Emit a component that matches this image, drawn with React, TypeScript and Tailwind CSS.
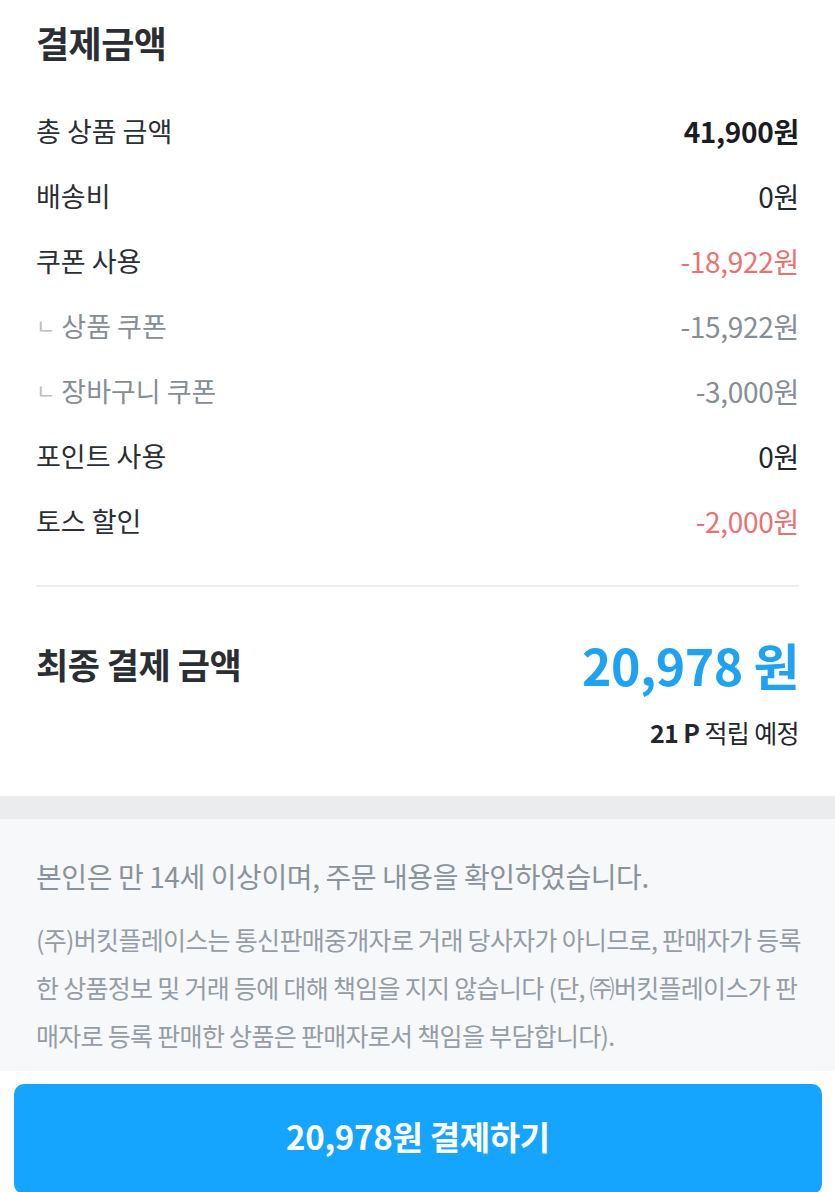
const rows: { label: string; value: string; tone: "strong" | "normal" | "red" | "sub" }[] = [
  { label: "총 상품 금액", value: "41,900원", tone: "strong" },
  { label: "배송비", value: "0원", tone: "normal" },
  { label: "쿠폰 사용", value: "-18,922원", tone: "red" },
  { label: "상품 쿠폰", value: "-15,922원", tone: "sub" },
  { label: "장바구니 쿠폰", value: "-3,000원", tone: "sub" },
  { label: "포인트 사용", value: "0원", tone: "normal" },
  { label: "토스 할인", value: "-2,000원", tone: "red" },
];

function valueClass(tone: string) {
  if (tone === "strong") return "font-bold text-[#1b1d22]";
  if (tone === "red") return "text-[#ec7070]";
  if (tone === "sub") return "text-[#858d96]";
  return "text-[#23262b]";
}

export default function App() {
  return (
    <div
      className="min-h-screen bg-white"
      style={{ fontFamily: '"Noto Sans CJK KR", "Noto Sans", sans-serif' }}
    >
      <section className="px-9 pt-[20px]">
        <h1 className="text-[36px] font-bold leading-[44px] tracking-[-0.5px] text-[#2b2e33]">결제금액</h1>

        <div className="mt-[33px]">
          {rows.map((r) => (
            <div key={r.label} className="flex h-[65px] items-center justify-between pt-[3px]">
              {r.tone === "sub" ? (
                <div className="flex items-center gap-[6px] text-[27px] text-[#858d96]">
                  <span className="text-[21px] text-[#b9bec4]">ㄴ</span>
                  <span>{r.label}</span>
                </div>
              ) : (
                <span className="text-[27px] text-[#2b2e33]">{r.label}</span>
              )}
              <span className={`text-[28px] tracking-[-0.3px] ${valueClass(r.tone)}`}>{r.value}</span>
            </div>
          ))}
        </div>

        <div className="mt-[33px] h-[2px] bg-[#eceef0]" />

        <div className="flex items-center justify-between pt-[47px]">
          <span className="text-[35px] font-bold leading-[60px] tracking-[-0.5px] text-[#2b2e33]">최종 결제 금액</span>
          <span className="text-[50px] font-bold leading-[60px] tracking-[-0.5px] text-[#1fa3f1]">20,978 원</span>
        </div>
        <div className="mt-[23px] pb-[49px] text-right text-[25px] leading-[30px] tracking-[-0.6px] text-[#23262b]">
          <span className="font-bold">21 P</span> 적립 예정
        </div>
      </section>

      <div className="h-[23px] bg-[#eaecee]" />

      <section className="bg-[#f7f8fa] px-9 pb-[12px] pt-[39px]">
        <p className="text-[28px] leading-[36px] tracking-[-0.4px] text-[#8a929b]">
          본인은 만 14세 이상이며, 주문 내용을 확인하였습니다.
        </p>
        <p className="mt-[21px] whitespace-nowrap text-[25px] leading-[48px] tracking-[-0.7px] text-[#959ca5]">
          (주)버킷플레이스는 통신판매중개자로 거래 당사자가 아니므로, 판매자가 등록
          <br />
          한 상품정보 및 거래 등에 대해 책임을 지지 않습니다 (단, ㈜버킷플레이스가 판
          <br />
          매자로 등록 판매한 상품은 판매자로서 책임을 부담합니다).
        </p>
      </section>

      <div className="px-[14px] pr-[13px] pt-[13px]">
        <button className="flex h-[110px] w-full items-center justify-center rounded-[10px] bg-[#15a5ff] pb-[4px] text-[33px] font-bold tracking-[-0.3px] text-white">
          20,978원 결제하기
        </button>
      </div>
    </div>
  );
}
